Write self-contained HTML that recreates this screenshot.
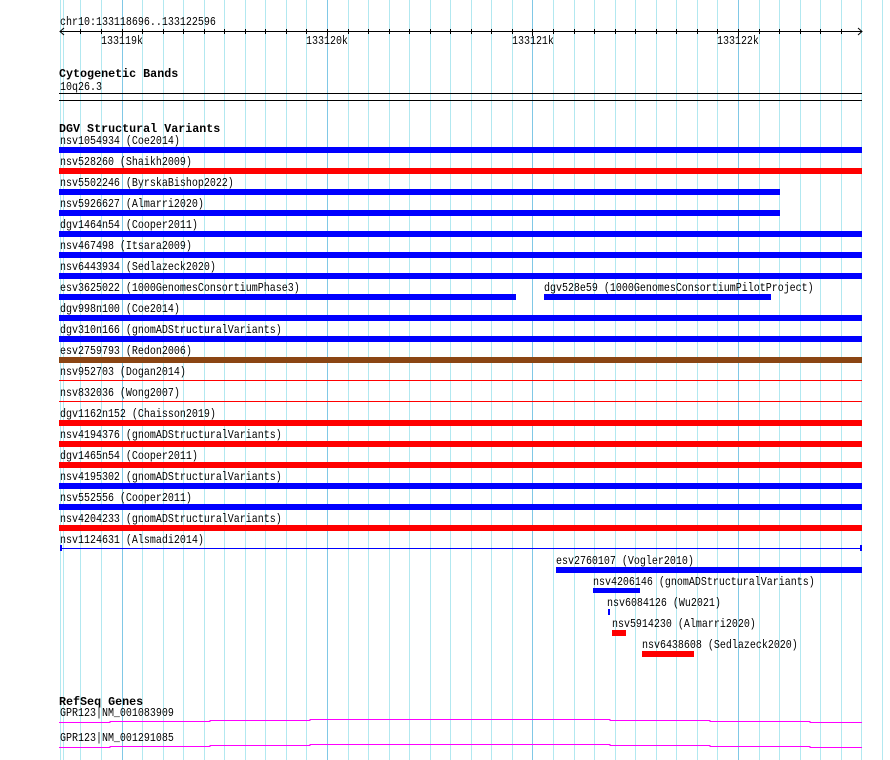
<!DOCTYPE html>
<html><head><meta charset="utf-8"><style>
html,body{margin:0;padding:0;background:#fff;width:890px;height:760px;overflow:hidden}
svg{display:block}
text{font-family:"Liberation Mono",monospace;font-size:12px;fill:#000}
.b{font-weight:bold;font-size:11.7px}
</style></head><body>
<svg width="890" height="760" xmlns="http://www.w3.org/2000/svg">
<g fill="#b2e8f0">
<rect x="60" y="0" width="1" height="760"/><rect x="63" y="0" width="1" height="760"/>
<rect x="80" y="0" width="1" height="760"/><rect x="101" y="0" width="1" height="760"/>
<rect x="142" y="0" width="1" height="760"/><rect x="163" y="0" width="1" height="760"/>
<rect x="183" y="0" width="1" height="760"/><rect x="204" y="0" width="1" height="760"/>
<rect x="224" y="0" width="1" height="760"/><rect x="245" y="0" width="1" height="760"/>
<rect x="265" y="0" width="1" height="760"/><rect x="286" y="0" width="1" height="760"/>
<rect x="306" y="0" width="1" height="760"/><rect x="348" y="0" width="1" height="760"/>
<rect x="368" y="0" width="1" height="760"/><rect x="389" y="0" width="1" height="760"/>
<rect x="409" y="0" width="1" height="760"/><rect x="430" y="0" width="1" height="760"/>
<rect x="450" y="0" width="1" height="760"/><rect x="471" y="0" width="1" height="760"/>
<rect x="491" y="0" width="1" height="760"/><rect x="512" y="0" width="1" height="760"/>
<rect x="553" y="0" width="1" height="760"/><rect x="574" y="0" width="1" height="760"/>
<rect x="594" y="0" width="1" height="760"/><rect x="615" y="0" width="1" height="760"/>
<rect x="635" y="0" width="1" height="760"/><rect x="656" y="0" width="1" height="760"/>
<rect x="676" y="0" width="1" height="760"/><rect x="697" y="0" width="1" height="760"/>
<rect x="717" y="0" width="1" height="760"/><rect x="759" y="0" width="1" height="760"/>
<rect x="779" y="0" width="1" height="760"/><rect x="800" y="0" width="1" height="760"/>
<rect x="820" y="0" width="1" height="760"/><rect x="841" y="0" width="1" height="760"/>
<rect x="861" y="0" width="1" height="760"/><rect x="882" y="0" width="1" height="760"/>
</g>
<g fill="#80c8e6">
<rect x="122" y="0" width="1" height="760"/><rect x="327" y="0" width="1" height="760"/>
<rect x="532" y="0" width="1" height="760"/><rect x="738" y="0" width="1" height="760"/>
</g>
<g fill="#000">
<rect x="80" y="29" width="1" height="5"/><rect x="101" y="29" width="1" height="5"/>
<rect x="122" y="29" width="1" height="7"/><rect x="142" y="29" width="1" height="5"/>
<rect x="163" y="29" width="1" height="5"/><rect x="183" y="29" width="1" height="5"/>
<rect x="204" y="29" width="1" height="5"/><rect x="224" y="29" width="1" height="5"/>
<rect x="245" y="29" width="1" height="5"/><rect x="265" y="29" width="1" height="5"/>
<rect x="286" y="29" width="1" height="5"/><rect x="306" y="29" width="1" height="5"/>
<rect x="327" y="29" width="1" height="7"/><rect x="348" y="29" width="1" height="5"/>
<rect x="368" y="29" width="1" height="5"/><rect x="389" y="29" width="1" height="5"/>
<rect x="409" y="29" width="1" height="5"/><rect x="430" y="29" width="1" height="5"/>
<rect x="450" y="29" width="1" height="5"/><rect x="471" y="29" width="1" height="5"/>
<rect x="491" y="29" width="1" height="5"/><rect x="512" y="29" width="1" height="5"/>
<rect x="532" y="29" width="1" height="7"/><rect x="553" y="29" width="1" height="5"/>
<rect x="574" y="29" width="1" height="5"/><rect x="594" y="29" width="1" height="5"/>
<rect x="615" y="29" width="1" height="5"/><rect x="635" y="29" width="1" height="5"/>
<rect x="656" y="29" width="1" height="5"/><rect x="676" y="29" width="1" height="5"/>
<rect x="697" y="29" width="1" height="5"/><rect x="717" y="29" width="1" height="5"/>
<rect x="738" y="29" width="1" height="7"/><rect x="759" y="29" width="1" height="5"/>
<rect x="779" y="29" width="1" height="5"/><rect x="800" y="29" width="1" height="5"/>
<rect x="820" y="29" width="1" height="5"/><rect x="841" y="29" width="1" height="5"/>
</g>
<rect x="60" y="31" width="802" height="1" fill="#000"/>
<path d="M64 28 L60 31.5 L64 35" stroke="#000" fill="none"/>
<path d="M858 28 L862 31.5 L858 35" stroke="#000" fill="none"/>
<text class="b" x="59" y="77">Cytogenetic Bands</text>
<rect x="59" y="93" width="803" height="1" fill="#000"/>
<rect x="59" y="100" width="803" height="1" fill="#000"/>
<text class="b" x="59" y="132">DGV Structural Variants</text>
<text class="b" x="59" y="705">RefSeq Genes</text>
<g>
<rect x="59" y="147" width="803" height="6" fill="#0000ff"/>
<rect x="59" y="168" width="803" height="6" fill="#ff0000"/>
<rect x="59" y="189" width="721" height="6" fill="#0000ff"/>
<rect x="59" y="210" width="721" height="6" fill="#0000ff"/>
<rect x="59" y="231" width="803" height="6" fill="#0000ff"/>
<rect x="59" y="252" width="803" height="6" fill="#0000ff"/>
<rect x="59" y="273" width="803" height="6" fill="#0000ff"/>
<rect x="59" y="294" width="457" height="6" fill="#0000ff"/>
<rect x="544" y="294" width="227" height="6" fill="#0000ff"/>
<rect x="59" y="315" width="803" height="6" fill="#0000ff"/>
<rect x="59" y="336" width="803" height="6" fill="#0000ff"/>
<rect x="59" y="357" width="803" height="6" fill="#8b4513"/>
<rect x="59" y="380" width="803" height="1" fill="#ff0000"/>
<rect x="59" y="401" width="803" height="1" fill="#ff0000"/>
<rect x="59" y="420" width="803" height="6" fill="#ff0000"/>
<rect x="59" y="441" width="803" height="6" fill="#ff0000"/>
<rect x="59" y="462" width="803" height="6" fill="#ff0000"/>
<rect x="59" y="483" width="803" height="6" fill="#0000ff"/>
<rect x="59" y="504" width="803" height="6" fill="#0000ff"/>
<rect x="59" y="525" width="803" height="6" fill="#ff0000"/>
<rect x="60" y="548" width="802" height="1" fill="#0000ff"/>
<rect x="60" y="545" width="2" height="6" fill="#0000ff"/><rect x="860" y="545" width="2" height="6" fill="#0000ff"/>
<rect x="556" y="567" width="306" height="6" fill="#0000ff"/>
<rect x="593" y="588" width="47" height="5" fill="#0000ff"/>
<rect x="608" y="609" width="2" height="6" fill="#0000ff"/>
<rect x="612" y="630" width="14" height="6" fill="#ff0000"/>
<rect x="642" y="651" width="52" height="6" fill="#ff0000"/>
</g>
<polyline fill="none" stroke="#ff00ff" stroke-width="1" points="59,722.5 110,722.5 110,721.5 210,721.5 210,720.5 310,720.5 310,719.5 610,719.5 610,720.5 710,720.5 710,721.5 810,721.5 810,722.5 862,722.5"/>
<polyline fill="none" stroke="#ff00ff" stroke-width="1" points="59,747.5 110,747.5 110,746.5 210,746.5 210,745.5 310,745.5 310,744.5 610,744.5 610,745.5 710,745.5 710,746.5 810,746.5 810,747.5 862,747.5"/>
<g transform="scale(0.8333,1)">
<text x="72" y="25">chr10:133118696..133122596</text>
<text x="121.2" y="44">133119k</text>
<text x="367.2" y="44">133120k</text>
<text x="614.4" y="44">133121k</text>
<text x="860.4" y="44">133122k</text>
<text x="72" y="90">10q26.3</text>
<text x="72" y="144">nsv1054934 (Coe2014)</text>
<text x="72" y="165">nsv528260 (Shaikh2009)</text>
<text x="72" y="186">nsv5502246 (ByrskaBishop2022)</text>
<text x="72" y="207">nsv5926627 (Almarri2020)</text>
<text x="72" y="228">dgv1464n54 (Cooper2011)</text>
<text x="72" y="249">nsv467498 (Itsara2009)</text>
<text x="72" y="270">nsv6443934 (Sedlazeck2020)</text>
<text x="72" y="291">esv3625022 (1000GenomesConsortiumPhase3)</text>
<text x="652.8" y="291">dgv528e59 (1000GenomesConsortiumPilotProject)</text>
<text x="72" y="312">dgv998n100 (Coe2014)</text>
<text x="72" y="333">dgv310n166 (gnomADStructuralVariants)</text>
<text x="72" y="354">esv2759793 (Redon2006)</text>
<text x="72" y="375">nsv952703 (Dogan2014)</text>
<text x="72" y="396">nsv832036 (Wong2007)</text>
<text x="72" y="417">dgv1162n152 (Chaisson2019)</text>
<text x="72" y="438">nsv4194376 (gnomADStructuralVariants)</text>
<text x="72" y="459">dgv1465n54 (Cooper2011)</text>
<text x="72" y="480">nsv4195302 (gnomADStructuralVariants)</text>
<text x="72" y="501">nsv552556 (Cooper2011)</text>
<text x="72" y="522">nsv4204233 (gnomADStructuralVariants)</text>
<text x="72" y="543">nsv1124631 (Alsmadi2014)</text>
<text x="667.2" y="564">esv2760107 (Vogler2010)</text>
<text x="711.6" y="585">nsv4206146 (gnomADStructuralVariants)</text>
<text x="728.4" y="606">nsv6084126 (Wu2021)</text>
<text x="734.4" y="627">nsv5914230 (Almarri2020)</text>
<text x="770.4" y="648">nsv6438608 (Sedlazeck2020)</text>
<text x="72" y="716">GPR123|NM_001083909</text>
<text x="72" y="741">GPR123|NM_001291085</text>
</g>
</svg>
</body></html>
